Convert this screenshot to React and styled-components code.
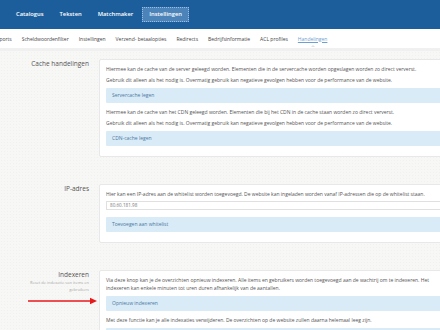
import React from "react";
import styled, { createGlobalStyle } from "styled-components";

const Global = createGlobalStyle`
  html, body { margin: 0; padding: 0; }
  body {
    width: 440px;
    height: 330px;
    overflow: hidden;
    font-family: "Open Sans", "Liberation Sans", sans-serif;
    color: #555;
    background-color: #f7f7f6;
    background-image: radial-gradient(rgba(0,0,0,0.025) 0.6px, transparent 0.7px);
    background-size: 3px 3px;
  }
`;

const TopBar = styled.header`
  height: 29px;
  background: #1c5e9b;
  display: flex;
  align-items: center;
  padding-left: 9px;
`;

const Tabs = styled.nav`
  display: flex;
  gap: 2px;
`;

const Tab = styled.a`
  height: 15px;
  line-height: 15px;
  padding: 0 7px;
  font-size: 5.8px;
  font-weight: 600;
  color: #fff;
  box-sizing: border-box;
  background: ${(p) => (p.$active ? "#4c83b9" : "transparent")};
  outline: ${(p) => (p.$active ? "1px dotted #9dbde0" : "none")};
  outline-offset: -1px;
`;

const SubNav = styled.nav`
  height: 19px;
  background: #fff;
  border-bottom: 3px solid #f0f0f0;
  display: flex;
  align-items: center;
  gap: 10px;
  overflow: hidden;
  white-space: nowrap;
`;

const SubList = styled.div`
  display: flex;
  gap: 10px;
  margin-left: -6px;
`;

const SubItem = styled.a`
  position: relative;
  font-size: 5px;
  color: ${(p) => (p.$active ? "#6e9fcf" : "#444")};
  text-decoration: ${(p) => (p.$active ? "underline" : "none")};
`;

const Caret = styled.span`
  position: absolute;
  left: 50%;
  top: 9px;
  margin-left: -2px;
  width: 0;
  height: 0;
  border-left: 2px solid transparent;
  border-right: 2px solid transparent;
  border-bottom: 2px solid #e2e2e2;
`;

const Content = styled.main`
  padding-top: 8px;
`;

const Section = styled.section`
  display: grid;
  grid-template-columns: 99px 349px;
  margin-bottom: 27px;
`;

const LabelCol = styled.div`
  position: relative;
  padding-right: 10px;
  text-align: right;
`;

const Label = styled.div`
  font-size: 6.5px;
  line-height: 10px;
  color: #555;
`;

const Hint = styled.div`
  margin-top: -1px;
  font-size: 4px;
  line-height: 7px;
  color: #aaa;
`;

const Arrow = styled.svg`
  position: absolute;
  left: 28px;
  top: 27px;
`;

const Panel = styled.div`
  box-sizing: border-box;
  width: 349px;
  background: #fff;
  border: 1px solid #e8e8e8;
  border-radius: 2px;
  padding: 5px 6px;
`;

const P = styled.p`
  margin: 0 0 3px;
  font-size: 5px;
  line-height: 8px;
  color: #555;
`;

const Button = styled.div`
  height: 15px;
  line-height: 15px;
  margin: 4px 0 5px;
  padding: 0 6px;
  background: #d9ebf6;
  color: #4a78a3;
  font-size: 5px;
  border-radius: 1px;
`;

const Input = styled.div`
  box-sizing: border-box;
  height: 9px;
  line-height: 7px;
  margin: 0 0 7px;
  padding: 0 3px;
  border: 1px solid #e0e0e0;
  font-size: 4.6px;
  color: #777;
`;

export default function App() {
  return (
    <>
      <Global />
      <TopBar>
        <Tabs>
          <Tab>Catalogus</Tab>
          <Tab>Teksten</Tab>
          <Tab>Matchmaker</Tab>
          <Tab $active>Instellingen</Tab>
        </Tabs>
      </TopBar>
      <SubNav>
        <SubList>
          <SubItem>Exports</SubItem>
          <SubItem>Scheldwoordenfilter</SubItem>
          <SubItem>Instellingen</SubItem>
          <SubItem>Verzend- betaalopties</SubItem>
          <SubItem>Redirects</SubItem>
          <SubItem>Bedrijfsinformatie</SubItem>
          <SubItem>ACL profiles</SubItem>
          <SubItem $active>
            Handelingen
            <Caret />
          </SubItem>
        </SubList>
      </SubNav>
      <Content>
        <Section>
          <LabelCol>
            <Label>Cache handelingen</Label>
          </LabelCol>
          <Panel>
            <P>
              Hiermee kan de cache van de server geleegd worden. Elementen die in de servercache worden opgeslagen worden zo direct ververst.
            </P>
            <P>Gebruik dit alleen als het nodig is. Overmatig gebruik kan negatieve gevolgen hebben voor de performance van de website.</P>
            <Button>Servercache legen</Button>
            <P>
              Hiermee kan de cache van het CDN geleegd worden. Elementen die bij het CDN in de cache staan worden zo direct ververst.
            </P>
            <P>Gebruik dit alleen als het nodig is. Overmatig gebruik kan negatieve gevolgen hebben voor de performance van de website.</P>
            <Button>CDN-cache legen</Button>
          </Panel>
        </Section>
        <Section>
          <LabelCol>
            <Label>IP-adres</Label>
          </LabelCol>
          <Panel>
            <P>
              Hier kan een IP-adres aan de whitelist worden toegevoegd. De website kan ingeladen worden vanaf IP-adressen die op de whitelist staan.
            </P>
            <Input>80.60.181.98</Input>
            <Button>Toevoegen aan whitelist</Button>
          </Panel>
        </Section>
        <Section>
          <LabelCol>
            <Label>Indexeren</Label>
            <Hint>
              Reset de indexatie van items en
              <br />
              gebruikers
            </Hint>
            <Arrow width="70" height="8" viewBox="0 0 70 8">
              <line x1="0" y1="4" x2="63" y2="4" stroke="#e8191b" strokeWidth="1.6" />
              <polygon points="62,0.8 69,4 62,7.2" fill="#e8191b" />
            </Arrow>
          </LabelCol>
          <Panel>
            <P>
              Via deze knop kan je de overzichten opnieuw indexeren. Alle items en gebruikers worden toegevoegd aan de wachtrij om te indexeren. Het indexeren kan enkele minuten tot uren duren afhankelijk van de aantallen.
            </P>
            <Button>Opnieuw indexeren</Button>
            <P>Met deze functie kan je alle indexaties verwijderen. De overzichten op de website zullen daarna helemaal leeg zijn.</P>
            <Button>Indexaties verwijderen</Button>
          </Panel>
        </Section>
      </Content>
    </>
  );
}
